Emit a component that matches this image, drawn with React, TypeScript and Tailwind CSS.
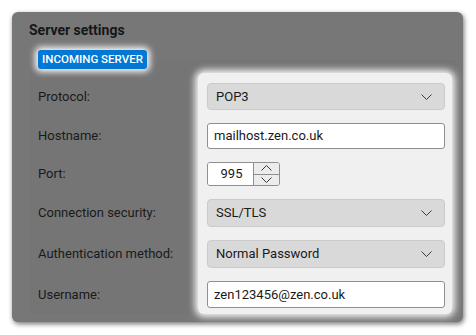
import React from "react";

const font = { fontFamily: 'Roboto, "Noto Sans", sans-serif' };

const Chevron = ({ up }: { up?: boolean }) => (
  <svg width="11" height="6" viewBox="0 0 11 6" fill="none" stroke="#3a3a3a" strokeWidth="1">
    <path d={up ? "M0.5 5.5L5.5 0.5L10.5 5.5" : "M0.5 0.5L5.5 5.5L10.5 0.5"} />
  </svg>
);

const Select = ({ value, h }: { value: string; h: string }) => (
  <div className={`${h} flex items-center justify-between rounded-[4px] border border-[#cbcbcb] bg-[#d9d9d9] pl-[8px] pr-[12px] text-[13px] text-[#1a1a1a]`}>
    <span>{value}</span>
    <Chevron />
  </div>
);

const Input = ({ value, h }: { value: string; h: string }) => (
  <div className={`${h} flex items-center rounded-[3px] border border-[#8f8f8f] bg-white pl-[6px] text-[13px] text-[#1a1a1a]`}>
    {value}
  </div>
);

const Spinner = () => (
  <div className="flex h-[24px] w-[73px] overflow-hidden rounded-[3px] border border-[#8f8f8f]">
    <div className="flex w-[45px] items-center justify-center bg-white pl-[2px] text-[13px] text-[#1a1a1a]">995</div>
    <div className="flex flex-1 flex-col border-l border-[#8f8f8f] bg-[#ececec]">
      <div className="flex flex-1 items-center justify-center border-b border-[#8f8f8f]">
        <Chevron up />
      </div>
      <div className="flex flex-1 items-center justify-center">
        <Chevron />
      </div>
    </div>
  </div>
);

const labels: [string, string][] = [
  ["Protocol:", "h-[27px]"],
  ["Hostname:", "h-[26px]"],
  ["Port:", "h-[24px]"],
  ["Connection security:", "h-[28px]"],
  ["Authentication method:", "h-[28px]"],
  ["Username:", "h-[27px]"],
];

export default function App() {
  return (
    <div className="h-[335px] w-[476px] bg-white pl-[12px] pt-[12px]" style={font}>
      <div className="flex h-[310px] w-[451px] flex-col rounded-[6px] bg-[#777777] shadow-[1px_2px_5px_rgba(0,0,0,0.55)]">
        <div className="pl-[17px] pt-[9px] text-[14px] font-bold leading-[18px] text-[#161616]">
          Server settings
        </div>
        <div className="relative z-10 ml-[26px] mt-[11px] mb-[-9px] flex h-[19px] w-[109px] items-center justify-center rounded-[3px] bg-[#0078d4] text-[11.5px] font-medium text-white shadow-[0_0_6px_3px_rgba(255,255,255,0.95)]">
          INCOMING SERVER
        </div>
        <div className="ml-[18px] mr-[7px] mb-[8px] flex flex-1 rounded-b-[4px] bg-[#757575] pt-[13px]">
          <div className="flex w-[168px] flex-col gap-[13px] pl-[8px] pt-[10px] text-[13px] text-[#1a1a1a]">
            {labels.map(([l, h]) => (
              <div key={l} className={`${h} flex items-center`}>
                {l}
              </div>
            ))}
          </div>
          <div className="flex h-[241px] w-[254px] flex-col gap-[13px] rounded-[6px] bg-[#f0f0f0] pl-[9px] pr-[7px] pt-[10px] shadow-[0_0_7px_3px_rgba(255,255,255,0.95)]">
            <Select value="POP3" h="h-[27px]" />
            <Input value="mailhost.zen.co.uk" h="h-[26px]" />
            <Spinner />
            <Select value="SSL/TLS" h="h-[28px]" />
            <Select value="Normal Password" h="h-[28px]" />
            <Input value="zen123456@zen.co.uk" h="h-[27px]" />
          </div>
        </div>
      </div>
    </div>
  );
}
